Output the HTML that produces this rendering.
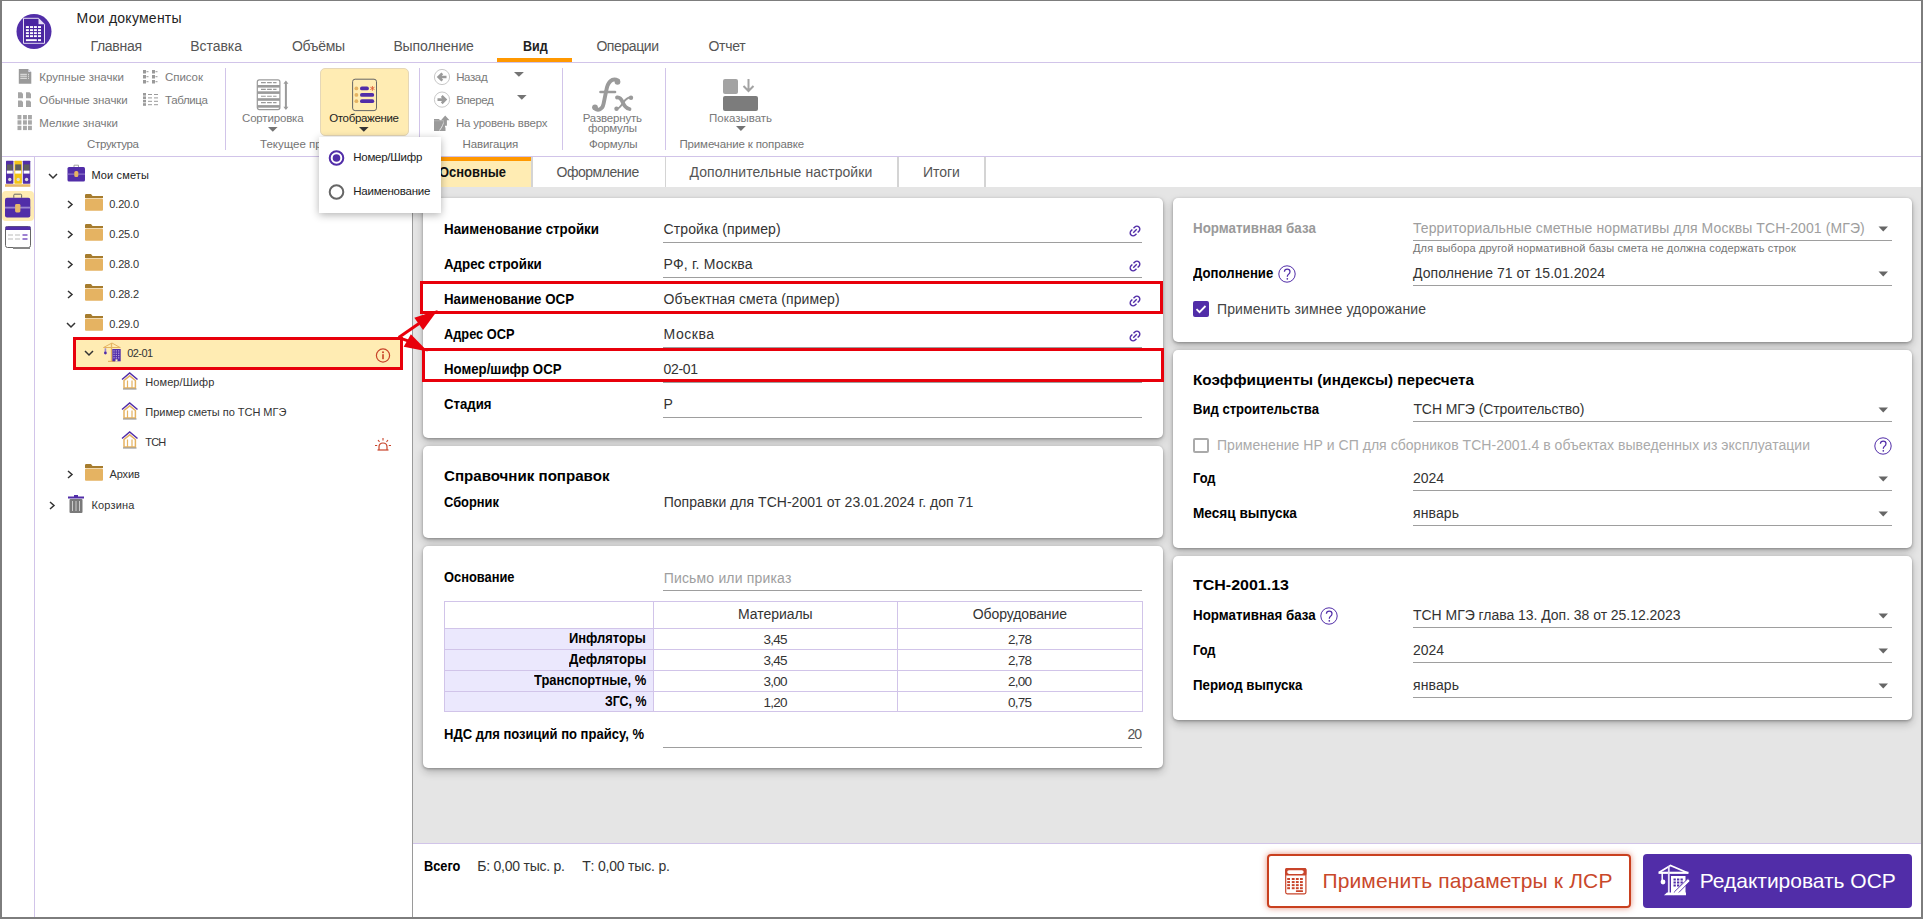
<!DOCTYPE html>
<html><head><meta charset="utf-8"><title>OSR</title>
<style>
html,body{margin:0;padding:0;}
body{width:1923px;height:919px;position:relative;overflow:hidden;background:#fff;font-family:"Liberation Sans",sans-serif;}
.t{position:absolute;white-space:nowrap;line-height:1;font-family:"Liberation Sans",sans-serif;}
.a{position:absolute;}
</style></head><body>
<div class="a" style="left:2px;top:62px;width:1919px;height:1px;background:#d1c4e9"></div>
<svg class="a" style="left:16px;top:14px" width="36" height="36" viewBox="0 0 36 36"><circle cx="18" cy="17.5" r="17.5" fill="#512da8"/>
<path d="M7.5 4.3h15l6 6v19h-21z" fill="#4a25a0" stroke="#fff" stroke-width="0.9" opacity=".95"/>
<path d="M22.5 4.3v6h6z" fill="#e8e0f8"/>
<rect x="9.9" y="12.1" width="3" height="1.9" fill="#fff"/><rect x="14" y="12.1" width="3" height="1.9" fill="#fff"/><rect x="17.9" y="12.1" width="3" height="1.9" fill="#fff"/><rect x="22" y="12.1" width="3" height="1.9" fill="#fff"/><rect x="9.9" y="15.2" width="3" height="1.9" fill="#fff"/><rect x="14" y="15.2" width="3" height="1.9" fill="#fff"/><rect x="17.9" y="15.2" width="3" height="1.9" fill="#fff"/><rect x="22" y="15.2" width="3" height="1.9" fill="#fff"/><rect x="9.9" y="18.2" width="3" height="1.9" fill="#fff"/><rect x="14" y="18.2" width="3" height="1.9" fill="#fff"/><rect x="17.9" y="18.2" width="3" height="1.9" fill="#fff"/><rect x="22" y="18.2" width="3" height="1.9" fill="#fff"/><rect x="9.9" y="21.2" width="3" height="1.9" fill="#fff"/><rect x="14" y="21.2" width="3" height="1.9" fill="#fff"/><rect x="17.9" y="21.2" width="3" height="1.9" fill="#fff"/><rect x="22" y="21.2" width="3" height="1.9" fill="#fff"/><rect x="9.9" y="25.2" width="10.9" height="1.9" fill="#fff"/><rect x="22" y="25.2" width="3" height="1.9" fill="#fff"/></svg>
<div class="t" style="left:76.60px;top:11px;font-size:14px;color:#222;letter-spacing:0.248px;">Мои документы</div>
<div class="t" style="left:90.50px;top:39px;font-size:14px;color:#555;letter-spacing:-0.297px;">Главная</div>
<div class="t" style="left:190.30px;top:39px;font-size:14px;color:#555;letter-spacing:-0.059px;">Вставка</div>
<div class="t" style="left:292.00px;top:39px;font-size:14px;color:#555;letter-spacing:-0.334px;">Объёмы</div>
<div class="t" style="left:393.40px;top:39px;font-size:14px;color:#555;letter-spacing:-0.109px;">Выполнение</div>
<div class="t" style="left:522.70px;top:39px;font-size:14px;color:#222;font-weight:700;transform:scaleX(0.8947);transform-origin:0 0;">Вид</div>
<div class="t" style="left:596.40px;top:39px;font-size:14px;color:#555;letter-spacing:-0.413px;">Операции</div>
<div class="t" style="left:708.50px;top:39px;font-size:14px;color:#555;letter-spacing:-0.308px;">Отчет</div>
<div class="a" style="left:497px;top:58px;width:75px;height:4px;background:#ff9800"></div>
<svg class="a" style="left:18px;top:69px" width="14" height="15" viewBox="0 0 14 15"><path d="M0.8 0h9.5l3 3v11.8H0.8z" fill="#9a9a9a"/><path d="M10.3 0l3 3h-3z" fill="#e3e3f0"/><path d="M2.3 5.3h6.6M2.3 7.2h6.6M2.3 9.3h6.6M10 5.3h1M10 7.2h1M10 9.3h1" stroke="#f0f0f0" stroke-width="0.9"/></svg>
<div class="t" style="left:39.30px;top:72px;font-size:11.5px;color:#7a7a7a;letter-spacing:0.026px;">Крупные значки</div>
<svg class="a" style="left:17px;top:91px" width="15" height="17" viewBox="0 0 15 17"><path d="M1 1.3h3.5l1.5 1.5v4.5h-5z" fill="#a5a5a5"/><path d="M9 1.3h3.5l1.5 1.5v4.5h-5z" fill="#a5a5a5"/><path d="M1 9.5h3.5l1.5 1.5v5.0h-5z" fill="#a5a5a5"/><path d="M9 9.5h3.5l1.5 1.5v5.0h-5z" fill="#a5a5a5"/></svg>
<div class="t" style="left:39.30px;top:95px;font-size:11.5px;color:#7a7a7a;letter-spacing:-0.062px;">Обычные значки</div>
<svg class="a" style="left:17px;top:115px" width="16" height="16" viewBox="0 0 16 16"><rect x="0.5" y="0" width="3.9" height="4.3" fill="#a8a8a8"/><rect x="6" y="0" width="3.9" height="4.3" fill="#a8a8a8"/><rect x="11" y="0" width="3.9" height="4.3" fill="#a8a8a8"/><rect x="0.5" y="5.3" width="3.9" height="4.3" fill="#a8a8a8"/><rect x="6" y="5.3" width="3.9" height="4.3" fill="#a8a8a8"/><rect x="11" y="5.3" width="3.9" height="4.3" fill="#a8a8a8"/><rect x="0.5" y="10.8" width="3.9" height="4.3" fill="#a8a8a8"/><rect x="6" y="10.8" width="3.9" height="4.3" fill="#a8a8a8"/><rect x="11" y="10.8" width="3.9" height="4.3" fill="#a8a8a8"/></svg>
<div class="t" style="left:39.30px;top:118px;font-size:11.5px;color:#7a7a7a;">Мелкие значки</div>
<svg class="a" style="left:143px;top:70px" width="16" height="14" viewBox="0 0 16 14"><rect x="0" y="0" width="3" height="3.5" fill="#9a9a9a"/><rect x="3.5" y="1.2" width="2" height="1" fill="#9a9a9a"/><rect x="9" y="0" width="3" height="3.5" fill="#9a9a9a"/><rect x="12.5" y="1.2" width="2" height="1" fill="#9a9a9a"/><rect x="0" y="5" width="3" height="3.5" fill="#9a9a9a"/><rect x="3.5" y="6.2" width="2" height="1" fill="#9a9a9a"/><rect x="9" y="5" width="3" height="3.5" fill="#9a9a9a"/><rect x="12.5" y="6.2" width="2" height="1" fill="#9a9a9a"/><rect x="0" y="10" width="3" height="3.5" fill="#9a9a9a"/><rect x="3.5" y="11.2" width="2" height="1" fill="#9a9a9a"/><rect x="9" y="10" width="3" height="3.5" fill="#9a9a9a"/><rect x="12.5" y="11.2" width="2" height="1" fill="#9a9a9a"/></svg>
<div class="t" style="left:165.00px;top:72px;font-size:11.5px;color:#7a7a7a;letter-spacing:-0.066px;">Список</div>
<svg class="a" style="left:143px;top:93px" width="16" height="14" viewBox="0 0 16 14"><rect x="0" y="0.0" width="3" height="2.6" fill="#9a9a9a"/><rect x="5" y="1.0" width="4" height="1" fill="#9a9a9a"/><rect x="11" y="1.0" width="4" height="1" fill="#9a9a9a"/><rect x="0" y="3.4" width="3" height="2.6" fill="#9a9a9a"/><rect x="5" y="4.4" width="4" height="1" fill="#9a9a9a"/><rect x="11" y="4.4" width="4" height="1" fill="#9a9a9a"/><rect x="0" y="6.8" width="3" height="2.6" fill="#9a9a9a"/><rect x="5" y="7.8" width="4" height="1" fill="#9a9a9a"/><rect x="11" y="7.8" width="4" height="1" fill="#9a9a9a"/><rect x="0" y="10.2" width="3" height="2.6" fill="#9a9a9a"/><rect x="5" y="11.2" width="4" height="1" fill="#9a9a9a"/><rect x="11" y="11.2" width="4" height="1" fill="#9a9a9a"/></svg>
<div class="t" style="left:165.00px;top:95px;font-size:11.5px;color:#7a7a7a;letter-spacing:-0.351px;">Таблица</div>
<div class="t" style="left:87.00px;top:139px;font-size:11.5px;color:#747474;letter-spacing:-0.321px;">Структура</div>
<div class="a" style="left:225px;top:68px;width:1px;height:82px;background:#d1c4e9"></div>
<svg class="a" style="left:256px;top:79px" width="34" height="32" viewBox="0 0 34 32"><rect x="1.3" y="0.9" width="22.6" height="29.7" rx="2" fill="#fff" stroke="#9a9a9a" stroke-width="1.2"/>
<rect x="1.3" y="6" width="22.6" height="2.6" fill="#9a9a9a"/><rect x="1.3" y="12.3" width="22.6" height="2.6" fill="#9a9a9a"/><rect x="1.3" y="19.2" width="22.6" height="2.6" fill="#9a9a9a"/><rect x="1.3" y="26.1" width="22.6" height="2.6" fill="#9a9a9a"/>
<path d="M5 3.6h4.8M11.1 3.6h4.7M17.1 3.6h3.4M5 10.4h4.8M11.1 10.4h4.7M17.1 10.4h3.4M5 17.3h4.8M11.1 17.3h4.7M17.1 17.3h3.4M5 23.6h4.8M11.1 23.6h4.7M17.1 23.6h3.4" stroke="#999" stroke-width="1.1"/>
<path d="M29.9 3v27" stroke="#9a9a9a" stroke-width="2"/><path d="M27.4 4.8L29.9 1.6 32.4 4.8zM27.4 27.8L29.9 31 32.4 27.8z" fill="#9a9a9a"/></svg>
<div class="t" style="left:242.00px;top:113px;font-size:11.5px;color:#7a7a7a;letter-spacing:-0.169px;">Сортировка</div>
<svg class="a" style="left:268px;top:127px" width="11" height="6" viewBox="0 0 11 6"><path d="M0 0H9.6L4.8 4.7z" fill="#747474"/></svg>
<div class="t" style="left:260.00px;top:139px;font-size:11.5px;color:#747474;">Текущее представление</div>
<div class="a" style="left:227px;top:68px;width:1px;height:0px;"></div>
<div class="a" style="left:419px;top:68px;width:1px;height:82px;background:#d1c4e9"></div>
<div class="a" style="left:319.5px;top:67.5px;width:88px;height:67px;background:#ffecb3;border:1px solid #e5d7b8;border-radius:5px;box-sizing:border-box;width:89px;height:68px"></div>
<svg class="a" style="left:352px;top:78px" width="26" height="34" viewBox="0 0 26 34"><rect x="0.6" y="1.2" width="23.9" height="31.4" rx="2.5" fill="none" stroke="#666" stroke-width="1"/>
<circle cx="4.4" cy="10.4" r="1.9" fill="#e5b362"/><circle cx="4.4" cy="16.9" r="1.9" fill="#e5b362"/><circle cx="4.4" cy="23.2" r="1.9" fill="#e5b362"/>
<rect x="8" y="8.5" width="8.9" height="3.8" rx="1.9" fill="#512da8"/><rect x="8" y="15" width="14.2" height="3.8" rx="1.9" fill="#512da8"/><rect x="8" y="21.3" width="14.2" height="3.8" rx="1.9" fill="#512da8"/>
<path d="M20.4 8v4.8M18.3 9.2l4.2 2.4M22.5 9.2l-4.2 2.4" stroke="#e0603a" stroke-width=".9"/></svg>
<div class="t" style="left:329.20px;top:113px;font-size:11.5px;color:#222;letter-spacing:-0.332px;">Отображение</div>
<svg class="a" style="left:359px;top:127px" width="11" height="6" viewBox="0 0 11 6"><path d="M0 0H9.6L4.8 4.7z" fill="#333"/></svg>
<svg class="a" style="left:433px;top:68px" width="18" height="18" viewBox="0 0 18 18"><circle cx="9" cy="9" r="7.6" fill="none" stroke="#c8c8c8" stroke-width="1"/><path d="M13.5 9H6M9.3 5.4L5.6 9l3.7 3.6" fill="none" stroke="#9a9a9a" stroke-width="2.6"/></svg>
<div class="t" style="left:456.20px;top:72px;font-size:11.5px;color:#7a7a7a;letter-spacing:-0.387px;">Назад</div>
<svg class="a" style="left:514px;top:72px" width="11" height="6" viewBox="0 0 11 6"><path d="M0 0H9.9L4.9 4.7z" fill="#747474"/></svg>
<svg class="a" style="left:433px;top:91px" width="18" height="18" viewBox="0 0 18 18"><circle cx="9" cy="8.6" r="7.6" fill="none" stroke="#c8c8c8" stroke-width="1"/><path d="M4.5 8.6H12M8.7 5l3.7 3.6-3.7 3.6" fill="none" stroke="#9a9a9a" stroke-width="2.6"/></svg>
<div class="t" style="left:456.20px;top:95px;font-size:11.5px;color:#7a7a7a;letter-spacing:-0.410px;">Вперед</div>
<svg class="a" style="left:517px;top:95px" width="11" height="6" viewBox="0 0 11 6"><path d="M0 0H9.6L4.8 4.8z" fill="#747474"/></svg>
<svg class="a" style="left:433px;top:115px" width="18" height="17" viewBox="0 0 18 17"><path d="M1 4h5l1 1.2H12V16H1z" fill="#9a9a9a"/><path d="M1 5.8h11" stroke="#bbb" stroke-width=".6"/><path d="M12.5 6.5V12L9 16H12.5V12" fill="#9a9a9a"/><path d="M6.5 15.5C9 12 10.5 9 11.5 5" stroke="#e5e5e5" stroke-width="1" fill="none"/><path d="M8 5.2L12.2 0.5 16.5 5.2h-2.6v5.5h-3.2V5.2z" fill="#9a9a9a"/></svg>
<div class="t" style="left:456.00px;top:118px;font-size:11.5px;color:#7a7a7a;letter-spacing:-0.215px;">На уровень вверх</div>
<div class="t" style="left:462.60px;top:139px;font-size:11.5px;color:#747474;letter-spacing:-0.139px;">Навигация</div>
<div class="a" style="left:562px;top:68px;width:1px;height:82px;background:#d1c4e9"></div>
<svg class="a" style="left:585px;top:74px" width="52" height="42" viewBox="0 0 52 42"><g fill="none" stroke="#9a9a9a" stroke-linecap="round">
<path d="M33 6.5C27 3.5 22.5 8 21.2 17L18.5 30C17.5 35.5 13 37 10 34.5" stroke-width="3.9"/>
<path d="M15.5 18H30" stroke-width="2.6"/>
<path d="M32 23.5Q35.5 23 37.8 28.5T44.5 35" stroke-width="3.8"/>
<path d="M46 23.5Q42 23 38 29T31.5 35" stroke-width="2"/></g>
<circle cx="32.5" cy="7.8" r="2.9" fill="#9a9a9a"/><circle cx="10" cy="33.3" r="2.9" fill="#9a9a9a"/>
<circle cx="46" cy="23.8" r="2.2" fill="#9a9a9a"/><circle cx="31.5" cy="34.8" r="2.2" fill="#9a9a9a"/></svg>
<div class="t" style="left:582.70px;top:113px;font-size:11.5px;color:#7a7a7a;letter-spacing:-0.174px;">Развернуть</div>
<div class="t" style="left:588.00px;top:123px;font-size:11.5px;color:#7a7a7a;letter-spacing:-0.294px;">формулы</div>
<div class="t" style="left:589.00px;top:139px;font-size:11.5px;color:#747474;letter-spacing:-0.275px;">Формулы</div>
<div class="a" style="left:665px;top:68px;width:1px;height:82px;background:#d1c4e9"></div>
<div class="a" style="left:723px;top:79px;width:15px;height:15px;background:#a3a3a3;border-radius:2px"></div>
<svg class="a" style="left:741px;top:78px" width="16" height="16" viewBox="0 0 16 16"><path d="M7.5 1v12M2.5 8l5 5 5-5" fill="none" stroke="#a3a3a3" stroke-width="2"/></svg>
<div class="a" style="left:723px;top:96px;width:35px;height:15px;background:#7c7c7c;border-radius:2px"></div>
<div class="t" style="left:709.00px;top:113px;font-size:11.5px;color:#7a7a7a;letter-spacing:-0.015px;">Показывать</div>
<svg class="a" style="left:736px;top:126px" width="11" height="6" viewBox="0 0 11 6"><path d="M0 0H9.8L4.9 4.9z" fill="#747474"/></svg>
<div class="t" style="left:679.40px;top:139px;font-size:11.5px;color:#747474;letter-spacing:-0.125px;">Примечание к поправке</div>
<div class="a" style="left:2px;top:156px;width:1919px;height:1px;background:#d1c4e9"></div>
<div class="a" style="left:34px;top:157px;width:1px;height:760px;background:#d1c4e9"></div>
<svg class="a" style="left:5px;top:160px" width="26" height="28" viewBox="0 0 26 28"><rect x="1" y="0.7" width="7.4" height="23" rx=".6" fill="#512da8"/><rect x="9.4" y="0.7" width="7.5" height="23" rx=".6" fill="#f2c318"/><rect x="17.8" y="0.7" width="7.5" height="23" rx=".6" fill="#512da8"/>
<rect x="1.8" y="4.4" width="6" height="6.2" fill="#5e5e5e"/><rect x="10.2" y="4.4" width="6" height="6.2" fill="#5e5e5e"/><rect x="18.6" y="4.4" width="6" height="6.2" fill="#5e5e5e"/>
<rect x="1.8" y="10.6" width="6" height="3" fill="#fff"/><rect x="10.2" y="10.6" width="6" height="3" fill="#fff"/><rect x="18.6" y="10.6" width="6" height="3" fill="#fff"/>
<circle cx="4.8" cy="19.5" r="1.7" fill="#ddd"/><circle cx="13.2" cy="19.5" r="1.7" fill="#ddd"/><circle cx="21.6" cy="19.5" r="1.7" fill="#ddd"/>
<rect x="0" y="24.2" width="25.3" height="2.6" fill="#e8b96a"/></svg>
<div class="a" style="left:2px;top:191px;width:32px;height:30px;background:#ffecb3;border-radius:4px"></div>
<svg class="a" style="left:5px;top:193px" width="26" height="26" viewBox="0 0 26 26"><path d="M8.8 4.8V2.2Q8.8 1.2 9.8 1.2H15.6Q16.6 1.2 16.6 2.2V4.8" fill="none" stroke="#666" stroke-width="1"/>
<rect x="0" y="4.8" width="25.3" height="19.8" rx="2" fill="#512da8"/><rect x="0" y="13.7" width="25.3" height="1.8" fill="#9b85d0"/>
<rect x="10.1" y="11" width="5.3" height="8.4" rx="1.3" fill="#e8b96a"/></svg>
<svg class="a" style="left:5px;top:226px" width="27" height="24" viewBox="0 0 27 24"><rect x="0.5" y="0.5" width="25" height="21" rx="2" fill="#fff" stroke="#666" stroke-width="1"/>
<rect x="0.5" y="0.5" width="25" height="3.5" fill="#512da8"/>
<path d="M3 9h5M10 9h5M3 13h5M10 13h5" stroke="#bbb" stroke-width="1"/><path d="M17.5 9h5M17.5 13h5" stroke="#7e57c2" stroke-width="1.4"/>
<path d="M8 22h17" stroke="#888" stroke-width="2"/></svg>
<div class="a" style="left:412px;top:157px;width:1px;height:760px;background:#9a9a9a"></div>
<svg class="a" style="left:48px;top:173px" width="10" height="7" viewBox="0 0 10 7"><path d="M1 1l4 4 4-4" fill="none" stroke="#333" stroke-width="1.5"/></svg>
<svg class="a" style="left:67px;top:164px" width="19" height="19" viewBox="0 0 19 19"><path d="M7 3V1.2h4.5V3" fill="none" stroke="#999" stroke-width="0.9"/><rect x="0.5" y="3" width="17.5" height="14.5" rx="1.5" fill="#512da8"/><rect x="0.5" y="9.6" width="17.5" height="1" fill="#9b85d0"/><rect x="7.3" y="7" width="4" height="6" rx="1.5" fill="#e5b362"/></svg>
<div class="t" style="left:91.40px;top:170px;font-size:11px;color:#222;letter-spacing:0.142px;">Мои сметы</div>
<svg class="a" style="left:67px;top:200px" width="7" height="9" viewBox="0 0 7 9"><path d="M1 1l4 3.5-4 3.5" fill="none" stroke="#333" stroke-width="1.5"/></svg>
<svg class="a" style="left:85px;top:194px" width="18" height="17" viewBox="0 0 18 17"><path d="M0 1.2Q0 0 1.2 0H6l1.5 2H18v2H0z" fill="#a67c2e"/><rect x="0" y="4.5" width="18" height="12.3" rx="1" fill="#e5b362"/></svg>
<div class="t" style="left:109.30px;top:199px;font-size:11px;color:#333;letter-spacing:-0.156px;">0.20.0</div>
<svg class="a" style="left:67px;top:230px" width="7" height="9" viewBox="0 0 7 9"><path d="M1 1l4 3.5-4 3.5" fill="none" stroke="#333" stroke-width="1.5"/></svg>
<svg class="a" style="left:85px;top:224px" width="18" height="17" viewBox="0 0 18 17"><path d="M0 1.2Q0 0 1.2 0H6l1.5 2H18v2H0z" fill="#a67c2e"/><rect x="0" y="4.5" width="18" height="12.3" rx="1" fill="#e5b362"/></svg>
<div class="t" style="left:109.30px;top:229px;font-size:11px;color:#333;letter-spacing:-0.156px;">0.25.0</div>
<svg class="a" style="left:67px;top:260px" width="7" height="9" viewBox="0 0 7 9"><path d="M1 1l4 3.5-4 3.5" fill="none" stroke="#333" stroke-width="1.5"/></svg>
<svg class="a" style="left:85px;top:254px" width="18" height="17" viewBox="0 0 18 17"><path d="M0 1.2Q0 0 1.2 0H6l1.5 2H18v2H0z" fill="#a67c2e"/><rect x="0" y="4.5" width="18" height="12.3" rx="1" fill="#e5b362"/></svg>
<div class="t" style="left:109.30px;top:259px;font-size:11px;color:#333;letter-spacing:-0.156px;">0.28.0</div>
<svg class="a" style="left:67px;top:290px" width="7" height="9" viewBox="0 0 7 9"><path d="M1 1l4 3.5-4 3.5" fill="none" stroke="#333" stroke-width="1.5"/></svg>
<svg class="a" style="left:85px;top:284px" width="18" height="17" viewBox="0 0 18 17"><path d="M0 1.2Q0 0 1.2 0H6l1.5 2H18v2H0z" fill="#a67c2e"/><rect x="0" y="4.5" width="18" height="12.3" rx="1" fill="#e5b362"/></svg>
<div class="t" style="left:109.30px;top:289px;font-size:11px;color:#333;letter-spacing:-0.156px;">0.28.2</div>
<svg class="a" style="left:66px;top:322px" width="10" height="7" viewBox="0 0 10 7"><path d="M1 1l4 4 4-4" fill="none" stroke="#333" stroke-width="1.5"/></svg>
<svg class="a" style="left:85px;top:314px" width="18" height="17" viewBox="0 0 18 17"><path d="M0 1.2Q0 0 1.2 0H6l1.5 2H18v2H0z" fill="#a67c2e"/><rect x="0" y="4.5" width="18" height="12.3" rx="1" fill="#e5b362"/></svg>
<div class="t" style="left:109.30px;top:319px;font-size:11px;color:#333;letter-spacing:-0.156px;">0.29.0</div>
<div class="a" style="left:72.5px;top:337.3px;width:330.5px;height:33px;background:#ffecb3;border:3px solid #e8000b;box-sizing:border-box"></div>
<svg class="a" style="left:84px;top:350px" width="10" height="7" viewBox="0 0 10 7"><path d="M1 1l4 4 4-4" fill="none" stroke="#333" stroke-width="1.5"/></svg>
<svg class="a" style="left:103px;top:342px" width="19" height="20" viewBox="0 0 19 20"><path d="M0.5 5.5L9 1 17 5.5M0.5 5.5H17.5" fill="none" stroke="#e5b362" stroke-width="1"/>
<path d="M8.5 1V19M5 19.3H12" stroke="#e5b362" stroke-width="1.3"/><rect x="1.6" y="6.3" width="1.6" height="3.6" fill="#9b85d0"/><circle cx="2.4" cy="11" r="1.4" fill="#512da8"/>
<rect x="9.3" y="7" width="8.4" height="12.3" fill="#512da8"/><rect x="10.4" y="8.3" width="1.3" height="1.2" fill="#b39ddb"/><rect x="12.7" y="8.3" width="1.3" height="1.2" fill="#b39ddb"/><rect x="15.0" y="8.3" width="1.3" height="1.2" fill="#b39ddb"/><rect x="10.4" y="10.6" width="1.3" height="1.2" fill="#b39ddb"/><rect x="12.7" y="10.6" width="1.3" height="1.2" fill="#b39ddb"/><rect x="15.0" y="10.6" width="1.3" height="1.2" fill="#b39ddb"/><rect x="10.4" y="12.9" width="1.3" height="1.2" fill="#b39ddb"/><rect x="12.7" y="12.9" width="1.3" height="1.2" fill="#b39ddb"/><rect x="15.0" y="12.9" width="1.3" height="1.2" fill="#b39ddb"/><rect x="10.4" y="15.2" width="1.3" height="1.2" fill="#b39ddb"/><rect x="12.7" y="15.2" width="1.3" height="1.2" fill="#b39ddb"/><rect x="15.0" y="15.2" width="1.3" height="1.2" fill="#b39ddb"/><rect x="12.5" y="17.3" width="2" height="2" fill="#fff3c4"/></svg>
<div class="t" style="left:127.20px;top:348px;font-size:11px;color:#333;letter-spacing:-0.535px;">02-01</div>
<svg class="a" style="left:375px;top:348px" width="16" height="16" viewBox="0 0 16 16"><circle cx="8" cy="7.5" r="6.6" fill="none" stroke="#c8442a" stroke-width="1.2"/><rect x="7.2" y="6.2" width="1.6" height="5" fill="#c8442a"/><circle cx="8" cy="4.3" r="1" fill="#c8442a"/></svg>
<svg class="a" style="left:121px;top:372px" width="18" height="18" viewBox="0 0 18 18"><path d="M1 7.5L8.7 1l7.8 6.5" fill="none" stroke="#512da8" stroke-width="1.5"/><path d="M3 8.5L8.7 3.8l5.7 4.7V16H3z" fill="none" stroke="#e5b362" stroke-width="1.5"/><path d="M6.5 8.5v7.5M11 8.5v7.5" stroke="#e5b362" stroke-width="1.2"/><path d="M2 17h13.5" stroke="#888" stroke-width="1"/></svg>
<div class="t" style="left:145.30px;top:377px;font-size:11px;color:#333;letter-spacing:0.077px;">Номер/Шифр</div>
<svg class="a" style="left:121px;top:402px" width="18" height="18" viewBox="0 0 18 18"><path d="M1 7.5L8.7 1l7.8 6.5" fill="none" stroke="#512da8" stroke-width="1.5"/><path d="M3 8.5L8.7 3.8l5.7 4.7V16H3z" fill="none" stroke="#e5b362" stroke-width="1.5"/><path d="M6.5 8.5v7.5M11 8.5v7.5" stroke="#e5b362" stroke-width="1.2"/><path d="M2 17h13.5" stroke="#888" stroke-width="1"/></svg>
<div class="t" style="left:145.30px;top:407px;font-size:11px;color:#333;letter-spacing:-0.030px;">Пример сметы по ТСН МГЭ</div>
<svg class="a" style="left:121px;top:431px" width="18" height="18" viewBox="0 0 18 18"><path d="M1 7.5L8.7 1l7.8 6.5" fill="none" stroke="#512da8" stroke-width="1.5"/><path d="M3 8.5L8.7 3.8l5.7 4.7V16H3z" fill="none" stroke="#e5b362" stroke-width="1.5"/><path d="M6.5 8.5v7.5M11 8.5v7.5" stroke="#e5b362" stroke-width="1.2"/><path d="M2 17h13.5" stroke="#888" stroke-width="1"/></svg>
<div class="t" style="left:145.30px;top:437px;font-size:11px;color:#333;letter-spacing:-0.803px;">ТСН</div>
<svg class="a" style="left:375px;top:438px" width="16" height="13" viewBox="0 0 16 13"><path d="M4 12V9Q4 5 8 5T12 9v3" fill="none" stroke="#c8442a" stroke-width="1.2"/><path d="M2.5 12h11" stroke="#c8442a" stroke-width="1.2"/><path d="M8 0v2.5M3 2l1.5 1.8M13 2l-1.5 1.8M0 7.5h2.2M13.8 7.5H16" stroke="#c8442a" stroke-width="1.1"/></svg>
<svg class="a" style="left:67px;top:470px" width="7" height="9" viewBox="0 0 7 9"><path d="M1 1l4 3.5-4 3.5" fill="none" stroke="#333" stroke-width="1.5"/></svg>
<svg class="a" style="left:85px;top:464px" width="18" height="17" viewBox="0 0 18 17"><path d="M0 1.2Q0 0 1.2 0H6l1.5 2H18v2H0z" fill="#a67c2e"/><rect x="0" y="4.5" width="18" height="12.3" rx="1" fill="#e5b362"/></svg>
<div class="t" style="left:109.40px;top:469px;font-size:11px;color:#333;letter-spacing:-0.080px;">Архив</div>
<svg class="a" style="left:49px;top:501px" width="7" height="9" viewBox="0 0 7 9"><path d="M1 1l4 3.5-4 3.5" fill="none" stroke="#333" stroke-width="1.5"/></svg>
<svg class="a" style="left:68px;top:495px" width="17" height="19" viewBox="0 0 17 19"><rect x="0" y="1.5" width="16" height="2" fill="#512da8"/><rect x="6" y="0" width="4" height="2" fill="#512da8"/><rect x="1.5" y="4" width="13" height="14" rx="1" fill="#7a7a7a"/><path d="M4.5 6v10M8 6v10M11.5 6v10" stroke="#ccc" stroke-width="1"/></svg>
<div class="t" style="left:91.40px;top:500px;font-size:11px;color:#333;letter-spacing:0.182px;">Корзина</div>
<div class="a" style="left:413px;top:187px;width:1508px;height:656px;background:#e5e5e5"></div>
<div class="a" style="left:413px;top:157px;width:118px;height:30px;background:#ffecb3"></div>
<div class="a" style="left:413px;top:157px;width:118px;height:4px;background:#ff9800"></div>
<div class="a" style="left:531px;top:157px;width:1.5px;height:30px;background:#d4d4d4"></div>
<div class="a" style="left:664.5px;top:157px;width:1.5px;height:30px;background:#d4d4d4"></div>
<div class="a" style="left:897px;top:157px;width:1.5px;height:30px;background:#d4d4d4"></div>
<div class="a" style="left:984px;top:157px;width:1.5px;height:30px;background:#d4d4d4"></div>
<div class="t" style="left:439.00px;top:165px;font-size:14px;color:#111;font-weight:700;transform:scaleX(0.9242);transform-origin:0 0;">Основные</div>
<div class="t" style="left:556.50px;top:165px;font-size:14px;color:#555;letter-spacing:-0.466px;">Оформление</div>
<div class="t" style="left:689.50px;top:165px;font-size:14px;color:#555;letter-spacing:0.079px;">Дополнительные настройки</div>
<div class="t" style="left:922.90px;top:165px;font-size:14px;color:#555;">Итоги</div>
<div class="a" style="left:423px;top:198px;width:740px;height:240px;background:#fff;border-radius:5px;box-shadow:0 1px 3px rgba(0,0,0,.3),0 4px 8px rgba(0,0,0,.22)"></div>
<div class="a" style="left:423px;top:446px;width:740px;height:92px;background:#fff;border-radius:5px;box-shadow:0 1px 3px rgba(0,0,0,.3),0 4px 8px rgba(0,0,0,.22)"></div>
<div class="a" style="left:423px;top:546px;width:740px;height:222px;background:#fff;border-radius:5px;box-shadow:0 1px 3px rgba(0,0,0,.3),0 4px 8px rgba(0,0,0,.22)"></div>
<div class="a" style="left:1173px;top:198px;width:739px;height:144px;background:#fff;border-radius:5px;box-shadow:0 1px 3px rgba(0,0,0,.3),0 4px 8px rgba(0,0,0,.22)"></div>
<div class="a" style="left:1173px;top:350px;width:739px;height:198px;background:#fff;border-radius:5px;box-shadow:0 1px 3px rgba(0,0,0,.3),0 4px 8px rgba(0,0,0,.22)"></div>
<div class="a" style="left:1173px;top:556px;width:739px;height:164px;background:#fff;border-radius:5px;box-shadow:0 1px 3px rgba(0,0,0,.3),0 4px 8px rgba(0,0,0,.22)"></div>
<div class="t" style="left:443.50px;top:222px;font-size:14px;color:#000;font-weight:700;transform:scaleX(0.9534);transform-origin:0 0;">Наименование стройки</div>
<div class="t" style="left:663.60px;top:222px;font-size:14px;color:#333;letter-spacing:0.084px;">Стройка (пример)</div>
<div class="a" style="left:663px;top:242px;width:479px;height:1px;background:#9e9e9e"></div>
<svg class="a" style="left:1127px;top:223px" width="16" height="16" viewBox="0 0 16 16"><g transform="translate(8 8) rotate(-45) scale(1.17)" fill="none" stroke="#512da8" stroke-width="1.2"><path d="M-0.7 -2.5H-2.3A2.5 2.5 0 0 0 -2.3 2.5H-0.7M0.7 -2.5H2.3A2.5 2.5 0 0 1 2.3 2.5H0.7M-2.1 0H2.1"/></g></svg>
<div class="t" style="left:443.50px;top:257px;font-size:14px;color:#000;font-weight:700;transform:scaleX(0.9515);transform-origin:0 0;">Адрес стройки</div>
<div class="t" style="left:663.60px;top:257px;font-size:14px;color:#333;letter-spacing:0.201px;">РФ, г. Москва</div>
<div class="a" style="left:663px;top:277px;width:479px;height:1px;background:#9e9e9e"></div>
<svg class="a" style="left:1127px;top:258px" width="16" height="16" viewBox="0 0 16 16"><g transform="translate(8 8) rotate(-45) scale(1.17)" fill="none" stroke="#512da8" stroke-width="1.2"><path d="M-0.7 -2.5H-2.3A2.5 2.5 0 0 0 -2.3 2.5H-0.7M0.7 -2.5H2.3A2.5 2.5 0 0 1 2.3 2.5H0.7M-2.1 0H2.1"/></g></svg>
<div class="t" style="left:443.50px;top:292px;font-size:14px;color:#000;font-weight:700;transform:scaleX(0.9494);transform-origin:0 0;">Наименование ОСР</div>
<div class="t" style="left:663.60px;top:292px;font-size:14px;color:#333;letter-spacing:0.076px;">Объектная смета (пример)</div>
<div class="a" style="left:663px;top:312px;width:479px;height:1px;background:#9e9e9e"></div>
<svg class="a" style="left:1127px;top:293px" width="16" height="16" viewBox="0 0 16 16"><g transform="translate(8 8) rotate(-45) scale(1.17)" fill="none" stroke="#512da8" stroke-width="1.2"><path d="M-0.7 -2.5H-2.3A2.5 2.5 0 0 0 -2.3 2.5H-0.7M0.7 -2.5H2.3A2.5 2.5 0 0 1 2.3 2.5H0.7M-2.1 0H2.1"/></g></svg>
<div class="t" style="left:443.50px;top:327px;font-size:14px;color:#000;font-weight:700;transform:scaleX(0.9136);transform-origin:0 0;">Адрес ОСР</div>
<div class="t" style="left:663.60px;top:327px;font-size:14px;color:#333;letter-spacing:0.538px;">Москва</div>
<div class="a" style="left:663px;top:347px;width:479px;height:1px;background:#9e9e9e"></div>
<svg class="a" style="left:1127px;top:328px" width="16" height="16" viewBox="0 0 16 16"><g transform="translate(8 8) rotate(-45) scale(1.17)" fill="none" stroke="#512da8" stroke-width="1.2"><path d="M-0.7 -2.5H-2.3A2.5 2.5 0 0 0 -2.3 2.5H-0.7M0.7 -2.5H2.3A2.5 2.5 0 0 1 2.3 2.5H0.7M-2.1 0H2.1"/></g></svg>
<div class="t" style="left:443.50px;top:362px;font-size:14px;color:#000;font-weight:700;transform:scaleX(0.9448);transform-origin:0 0;">Номер/шифр ОСР</div>
<div class="t" style="left:663.60px;top:362px;font-size:14px;color:#333;letter-spacing:-0.328px;">02-01</div>
<div class="a" style="left:663px;top:382px;width:479px;height:1px;background:#9e9e9e"></div>
<div class="t" style="left:443.50px;top:397px;font-size:14px;color:#000;font-weight:700;transform:scaleX(0.9422);transform-origin:0 0;">Стадия</div>
<div class="t" style="left:663.60px;top:397px;font-size:14px;color:#333;">Р</div>
<div class="a" style="left:663px;top:417px;width:479px;height:1px;background:#9e9e9e"></div>
<div class="t" style="left:444.00px;top:468px;font-size:15px;color:#000;font-weight:700;transform:scaleX(1.0069);transform-origin:0 0;">Справочник поправок</div>
<div class="t" style="left:444.00px;top:495px;font-size:14px;color:#000;font-weight:700;transform:scaleX(0.9205);transform-origin:0 0;">Сборник</div>
<div class="t" style="left:663.70px;top:495px;font-size:14px;color:#333;letter-spacing:0.024px;">Поправки для ТСН-2001 от 23.01.2024 г. доп 71</div>
<div class="t" style="left:444.00px;top:570px;font-size:14px;color:#000;font-weight:700;transform:scaleX(0.9188);transform-origin:0 0;">Основание</div>
<div class="t" style="left:663.70px;top:571px;font-size:14px;color:#9e9e9e;letter-spacing:0.173px;">Письмо или приказ</div>
<div class="a" style="left:663px;top:590px;width:479px;height:1px;background:#9e9e9e"></div>
<div class="a" style="left:443.5px;top:601.4px;width:699px;height:110.5px;border:1px solid #d1c4e9;box-sizing:border-box"></div>
<div class="a" style="left:444.5px;top:628.4px;width:209px;height:83px;background:#ebe8fd"></div>
<div class="a" style="left:443.5px;top:628px;width:699px;height:1px;background:#d1c4e9"></div>
<div class="a" style="left:443.5px;top:649px;width:699px;height:1px;background:#d1c4e9"></div>
<div class="a" style="left:443.5px;top:670px;width:699px;height:1px;background:#d1c4e9"></div>
<div class="a" style="left:443.5px;top:691px;width:699px;height:1px;background:#d1c4e9"></div>
<div class="a" style="left:653px;top:601.4px;width:1px;height:110.5px;background:#d1c4e9"></div>
<div class="a" style="left:897px;top:601.4px;width:1px;height:110.5px;background:#d1c4e9"></div>
<div class="t" style="left:738.00px;top:607px;font-size:14px;color:#333;letter-spacing:-0.046px;">Материалы</div>
<div class="t" style="left:972.80px;top:607px;font-size:14px;color:#333;letter-spacing:-0.092px;">Оборудование</div>
<div class="t" style="left:569.10px;top:631px;font-size:14px;color:#000;font-weight:700;transform:scaleX(0.9229);transform-origin:0 0;">Инфляторы</div>
<div class="t" style="left:763.50px;top:633px;font-size:13.5px;color:#333;letter-spacing:-0.757px;">3,45</div>
<div class="t" style="left:1008.00px;top:633px;font-size:13.5px;color:#333;letter-spacing:-0.757px;">2,78</div>
<div class="t" style="left:568.60px;top:652px;font-size:14px;color:#000;font-weight:700;transform:scaleX(0.9355);transform-origin:0 0;">Дефляторы</div>
<div class="t" style="left:763.50px;top:654px;font-size:13.5px;color:#333;letter-spacing:-0.757px;">3,45</div>
<div class="t" style="left:1008.00px;top:654px;font-size:13.5px;color:#333;letter-spacing:-0.757px;">2,78</div>
<div class="t" style="left:533.70px;top:673px;font-size:14px;color:#000;font-weight:700;transform:scaleX(0.9253);transform-origin:0 0;">Транспортные, %</div>
<div class="t" style="left:763.50px;top:675px;font-size:13.5px;color:#333;letter-spacing:-0.757px;">3,00</div>
<div class="t" style="left:1008.00px;top:675px;font-size:13.5px;color:#333;letter-spacing:-0.757px;">2,00</div>
<div class="t" style="left:604.50px;top:694px;font-size:14px;color:#000;font-weight:700;transform:scaleX(0.8835);transform-origin:0 0;">ЗГС, %</div>
<div class="t" style="left:763.50px;top:696px;font-size:13.5px;color:#333;letter-spacing:-0.757px;">1,20</div>
<div class="t" style="left:1008.00px;top:696px;font-size:13.5px;color:#333;letter-spacing:-0.757px;">0,75</div>
<div class="t" style="left:443.80px;top:727px;font-size:14px;color:#000;font-weight:700;transform:scaleX(0.9299);transform-origin:0 0;">НДС для позиций по прайсу, %</div>
<div class="t" style="left:1127.50px;top:727px;font-size:14px;color:#555;letter-spacing:-1.068px;">20</div>
<div class="a" style="left:663px;top:747px;width:479px;height:1px;background:#9e9e9e"></div>
<div class="t" style="left:1193.00px;top:221px;font-size:14px;color:#9a9a9a;font-weight:700;transform:scaleX(0.9563);transform-origin:0 0;">Нормативная база</div>
<div class="t" style="left:1413.00px;top:221px;font-size:14px;color:#9e9e9e;letter-spacing:0.095px;">Территориальные сметные нормативы для Москвы ТСН-2001 (МГЭ)</div>
<svg class="a" style="left:1878px;top:226px" width="11" height="6" viewBox="0 0 11 6"><path d="M0.5 0.5h9.5l-4.75 5z" fill="#666"/></svg>
<div class="a" style="left:1413px;top:240px;width:479px;height:1px;background:#9e9e9e"></div>
<div class="t" style="left:1413.00px;top:243px;font-size:11px;color:#747474;letter-spacing:0.140px;">Для выбора другой нормативной базы смета не должна содержать строк</div>
<div class="t" style="left:1193.00px;top:266px;font-size:14px;color:#000;font-weight:700;transform:scaleX(0.9409);transform-origin:0 0;">Дополнение</div>
<svg class="a" style="left:1278px;top:265px" width="19" height="19" viewBox="0 0 19 19"><circle cx="9" cy="9" r="8.2" fill="none" stroke="#512da8" stroke-width="1"/><path d="M6.4 6.8Q6.6 4.1 9.2 4.1Q12 4.1 12 6.7Q12 8.3 10.3 9.4Q9.3 10.1 9.3 11.8" fill="none" stroke="#512da8" stroke-width="1.25"/><circle cx="9.3" cy="13.8" r="0.85" fill="#512da8"/></svg>
<div class="t" style="left:1413.00px;top:266px;font-size:14px;color:#333;letter-spacing:0.050px;">Дополнение 71 от 15.01.2024</div>
<svg class="a" style="left:1878px;top:271px" width="11" height="6" viewBox="0 0 11 6"><path d="M0.5 0.5h9.5l-4.75 5z" fill="#666"/></svg>
<div class="a" style="left:1413px;top:285px;width:479px;height:1px;background:#9e9e9e"></div>
<svg class="a" style="left:1193px;top:301px" width="16" height="16" viewBox="0 0 16 16"><rect x="0" y="0" width="16" height="16" rx="2" fill="#512da8"/><path d="M3.5 8.2l3 3 6-6.2" fill="none" stroke="#fff" stroke-width="1.8"/></svg>
<div class="t" style="left:1217.00px;top:302px;font-size:14px;color:#444;letter-spacing:0.128px;">Применить зимнее удорожание</div>
<div class="t" style="left:1193.00px;top:372px;font-size:15.5px;color:#000;font-weight:700;transform:scaleX(0.9848);transform-origin:0 0;">Коэффициенты (индексы) пересчета</div>
<div class="t" style="left:1193.00px;top:402px;font-size:14px;color:#000;font-weight:700;transform:scaleX(0.9338);transform-origin:0 0;">Вид строительства</div>
<div class="t" style="left:1413.40px;top:402px;font-size:14px;color:#333;letter-spacing:-0.074px;">ТСН МГЭ (Строительство)</div>
<svg class="a" style="left:1878px;top:407px" width="11" height="6" viewBox="0 0 11 6"><path d="M0.5 0.5h9.5l-4.75 5z" fill="#666"/></svg>
<div class="a" style="left:1413px;top:421px;width:479px;height:1px;background:#9e9e9e"></div>
<div class="a" style="left:1193px;top:437.5px;width:16px;height:15.5px;border:2px solid #aaa;border-radius:2px;box-sizing:border-box"></div>
<div class="t" style="left:1217.00px;top:438px;font-size:14px;color:#aaa;letter-spacing:0.040px;">Применение НР и СП для сборников ТСН-2001.4 в объектах выведенных из эксплуатации</div>
<svg class="a" style="left:1874px;top:437px" width="19" height="19" viewBox="0 0 19 19"><circle cx="9" cy="9" r="8.2" fill="none" stroke="#512da8" stroke-width="1"/><path d="M6.4 6.8Q6.6 4.1 9.2 4.1Q12 4.1 12 6.7Q12 8.3 10.3 9.4Q9.3 10.1 9.3 11.8" fill="none" stroke="#512da8" stroke-width="1.25"/><circle cx="9.3" cy="13.8" r="0.85" fill="#512da8"/></svg>
<div class="t" style="left:1193.00px;top:471px;font-size:14px;color:#000;font-weight:700;transform:scaleX(0.9184);transform-origin:0 0;">Год</div>
<div class="t" style="left:1413.00px;top:471px;font-size:14px;color:#333;letter-spacing:-0.050px;">2024</div>
<svg class="a" style="left:1878px;top:476px" width="11" height="6" viewBox="0 0 11 6"><path d="M0.5 0.5h9.5l-4.75 5z" fill="#666"/></svg>
<div class="a" style="left:1413px;top:490px;width:479px;height:1px;background:#9e9e9e"></div>
<div class="t" style="left:1193.00px;top:506px;font-size:14px;color:#000;font-weight:700;transform:scaleX(0.9733);transform-origin:0 0;">Месяц выпуска</div>
<div class="t" style="left:1413.00px;top:506px;font-size:14px;color:#333;letter-spacing:0.108px;">январь</div>
<svg class="a" style="left:1878px;top:511px" width="11" height="6" viewBox="0 0 11 6"><path d="M0.5 0.5h9.5l-4.75 5z" fill="#666"/></svg>
<div class="a" style="left:1413px;top:525px;width:479px;height:1px;background:#9e9e9e"></div>
<div class="t" style="left:1193.00px;top:577px;font-size:15.5px;color:#000;font-weight:700;transform:scaleX(1.0317);transform-origin:0 0;">ТСН-2001.13</div>
<div class="t" style="left:1193.00px;top:608px;font-size:14px;color:#000;font-weight:700;transform:scaleX(0.9540);transform-origin:0 0;">Нормативная база</div>
<svg class="a" style="left:1320px;top:607px" width="19" height="19" viewBox="0 0 19 19"><circle cx="9" cy="9" r="8.2" fill="none" stroke="#512da8" stroke-width="1"/><path d="M6.4 6.8Q6.6 4.1 9.2 4.1Q12 4.1 12 6.7Q12 8.3 10.3 9.4Q9.3 10.1 9.3 11.8" fill="none" stroke="#512da8" stroke-width="1.25"/><circle cx="9.3" cy="13.8" r="0.85" fill="#512da8"/></svg>
<div class="t" style="left:1413.00px;top:608px;font-size:14px;color:#333;letter-spacing:-0.037px;">ТСН МГЭ глава 13. Доп. 38 от 25.12.2023</div>
<svg class="a" style="left:1878px;top:613px" width="11" height="6" viewBox="0 0 11 6"><path d="M0.5 0.5h9.5l-4.75 5z" fill="#666"/></svg>
<div class="a" style="left:1413px;top:627px;width:479px;height:1px;background:#9e9e9e"></div>
<div class="t" style="left:1193.00px;top:643px;font-size:14px;color:#000;font-weight:700;transform:scaleX(0.9184);transform-origin:0 0;">Год</div>
<div class="t" style="left:1413.00px;top:643px;font-size:14px;color:#333;letter-spacing:-0.050px;">2024</div>
<svg class="a" style="left:1878px;top:648px" width="11" height="6" viewBox="0 0 11 6"><path d="M0.5 0.5h9.5l-4.75 5z" fill="#666"/></svg>
<div class="a" style="left:1413px;top:662px;width:479px;height:1px;background:#9e9e9e"></div>
<div class="t" style="left:1193.00px;top:678px;font-size:14px;color:#000;font-weight:700;transform:scaleX(0.9499);transform-origin:0 0;">Период выпуска</div>
<div class="t" style="left:1413.00px;top:678px;font-size:14px;color:#333;letter-spacing:0.108px;">январь</div>
<svg class="a" style="left:1878px;top:683px" width="11" height="6" viewBox="0 0 11 6"><path d="M0.5 0.5h9.5l-4.75 5z" fill="#666"/></svg>
<div class="a" style="left:1413px;top:697px;width:479px;height:1px;background:#9e9e9e"></div>
<div class="a" style="left:413px;top:843px;width:1508px;height:1px;background:#d1c4e9"></div>
<div class="t" style="left:423.80px;top:859px;font-size:14px;color:#000;font-weight:700;transform:scaleX(0.9126);transform-origin:0 0;">Всего</div>
<div class="t" style="left:477.30px;top:859px;font-size:14px;color:#333;letter-spacing:-0.238px;">Б: 0,00 тыс. р.</div>
<div class="t" style="left:582.20px;top:859px;font-size:14px;color:#333;letter-spacing:-0.193px;">Т: 0,00 тыс. р.</div>
<div class="a" style="left:1267px;top:854px;width:364px;height:54px;border:2px solid #c9401f;border-radius:4px;box-sizing:border-box;box-shadow:0 0 6px rgba(210,70,40,.6)"></div>
<svg class="a" style="left:1284px;top:867px" width="23" height="28" viewBox="0 0 23 28"><rect x="1.7" y="1.5" width="20.2" height="25.3" rx="1.5" fill="none" stroke="#c8442a" stroke-width="1.2"/><rect x="1.2" y="1" width="21.2" height="7.4" rx="1.5" fill="#c8442a"/><rect x="3.2" y="3.2" width="16.5" height="3.7" rx="1.8" fill="#fff"/><rect x="3.2" y="11.00" width="2.8" height="2" fill="#c8442a"/><rect x="7.8" y="11.00" width="2.8" height="2" fill="#c8442a"/><rect x="11.9" y="11.00" width="2.8" height="2" fill="#c8442a"/><rect x="16.0" y="11.00" width="2.8" height="2" fill="#c8442a"/><rect x="3.2" y="14.07" width="2.8" height="2" fill="#c8442a"/><rect x="7.8" y="14.07" width="2.8" height="2" fill="#c8442a"/><rect x="11.9" y="14.07" width="2.8" height="2" fill="#c8442a"/><rect x="16.0" y="14.07" width="2.8" height="2" fill="#c8442a"/><rect x="3.2" y="17.14" width="2.8" height="2" fill="#c8442a"/><rect x="7.8" y="17.14" width="2.8" height="2" fill="#c8442a"/><rect x="11.9" y="17.14" width="2.8" height="2" fill="#c8442a"/><rect x="16.0" y="17.14" width="2.8" height="2" fill="#c8442a"/><rect x="3.2" y="20.21" width="2.8" height="2" fill="#c8442a"/><rect x="7.8" y="20.21" width="2.8" height="2" fill="#c8442a"/><rect x="11.9" y="20.21" width="2.8" height="2" fill="#c8442a"/><rect x="16.0" y="20.21" width="2.8" height="2" fill="#c8442a"/><rect x="11.9" y="23.2" width="7.1" height="1.8" rx=".5" fill="#c8442a"/></svg>
<div class="t" style="left:1322.40px;top:870px;font-size:21px;color:#c9482b;letter-spacing:0.151px;">Применить параметры к ЛСР</div>
<div class="a" style="left:1643px;top:854px;width:269px;height:54px;background:#512da8;border-radius:4px"></div>
<svg class="a" style="left:1655px;top:862px" width="36" height="36" viewBox="0 0 36 36"><path d="M4 10.5L15.5 3.5 33 11" fill="none" stroke="#fff" stroke-width="1.8"/><path d="M3.5 10.8H33.5" stroke="#fff" stroke-width="2.2"/>
<path d="M13.8 4v29" stroke="#e8e0f8" stroke-width="1.8"/><path d="M7.2 11v7" stroke="#fff" stroke-width="1.5"/><circle cx="8" cy="20" r="2.4" fill="#fff"/>
<rect x="16" y="14" width="14.5" height="19" fill="#fff"/><rect x="18.5" y="16.5" width="2.3" height="2" fill="#512da8"/><rect x="22.0" y="16.5" width="2.3" height="2" fill="#512da8"/><rect x="25.5" y="16.5" width="2.3" height="2" fill="#512da8"/><rect x="18.5" y="19.5" width="2.3" height="2" fill="#512da8"/><rect x="22.0" y="19.5" width="2.3" height="2" fill="#512da8"/><rect x="25.5" y="19.5" width="2.3" height="2" fill="#512da8"/><rect x="18.5" y="22.5" width="2.3" height="2" fill="#512da8"/><rect x="22.0" y="22.5" width="2.3" height="2" fill="#512da8"/><rect x="25.5" y="22.5" width="2.3" height="2" fill="#512da8"/><path d="M33 16.5L35.2 19 22 32.3 18.5 33.3 19.5 29.7z" fill="#fff" stroke="#512da8" stroke-width="0.9"/><path d="M9 33.3L12 30.5H31V33.3z" fill="#fff"/></svg>
<div class="t" style="left:1699.80px;top:870px;font-size:21px;color:#fff;letter-spacing:-0.026px;">Редактировать ОСР</div>
<div class="a" style="left:319px;top:137px;width:122px;height:76px;background:#fff;box-shadow:0 2px 8px rgba(0,0,0,.3)"></div>
<svg class="a" style="left:328px;top:150px" width="17" height="17" viewBox="0 0 17 17"><circle cx="8.5" cy="8" r="6.8" fill="none" stroke="#512da8" stroke-width="2"/><circle cx="8.5" cy="8" r="3.8" fill="#512da8"/></svg>
<div class="t" style="left:353.20px;top:152px;font-size:11.5px;color:#222;letter-spacing:-0.246px;">Номер/Шифр</div>
<svg class="a" style="left:328px;top:184px" width="17" height="17" viewBox="0 0 17 17"><circle cx="8.5" cy="8" r="6.8" fill="none" stroke="#666" stroke-width="2"/></svg>
<div class="t" style="left:353.20px;top:186px;font-size:11.5px;color:#222;letter-spacing:-0.229px;">Наименование</div>
<div class="a" style="left:419.5px;top:280.7px;width:743px;height:33px;border:3px solid #e8000b;box-sizing:border-box"></div>
<div class="a" style="left:421.8px;top:348.3px;width:742px;height:34px;border:3px solid #e8000b;box-sizing:border-box"></div>
<svg class="a" style="left:390px;top:300px" width="60" height="60" viewBox="0 0 60 60"><path d="M8.7 37.6L29 23.5" stroke="#e8000b" stroke-width="3"/><path d="M47.8 10L24.3 17.8 33.1 30z" fill="#e8000b"/>
<path d="M8.7 37.6L18 40.8" stroke="#e8000b" stroke-width="3"/><path d="M37.8 51.6L20.9 34.2 13.7 46.8z" fill="#e8000b"/></svg>
<div class="a" style="left:0px;top:0px;width:1923px;height:919px;border-top:1px solid #7d7d7d;border-left:2px solid #7d7d7d;border-right:2px solid #7d7d7d;border-bottom:2px solid #7d7d7d;box-sizing:border-box"></div>
</body></html>
